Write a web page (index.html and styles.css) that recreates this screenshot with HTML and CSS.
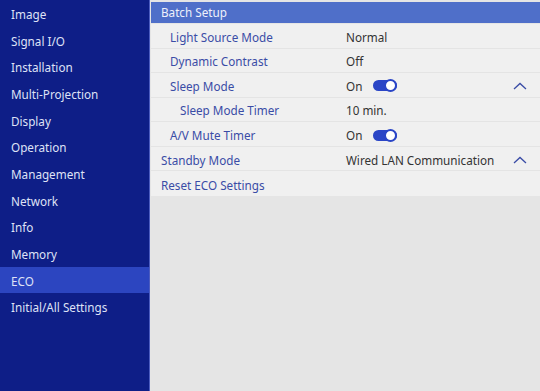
FILE: index.html
```html
<!DOCTYPE html>
<html lang="en">
<head>
  <meta charset="UTF-8">
  <title>ECO</title>
  <link rel="stylesheet" href="styles.css">
</head>
<body>
  <div class="screen">

    <!-- menu -->
    <div class="sidebar">
      <div class="menu-item">Image</div>
      <div class="menu-item">Signal I/O</div>
      <div class="menu-item">Installation</div>
      <div class="menu-item">Multi-Projection</div>
      <div class="menu-item">Display</div>
      <div class="menu-item">Operation</div>
      <div class="menu-item">Management</div>
      <div class="menu-item">Network</div>
      <div class="menu-item">Info</div>
      <div class="menu-item">Memory</div>
      <div class="menu-item active">ECO</div>
      <div class="menu-item">Initial/All Settings</div>
    </div>

    <!-- settings -->
    <div class="main">
      <div class="section-head">Batch Setup</div>
      <div class="list">
        <div class="row">
          <span class="label lvl1">Light Source Mode</span>
          <span class="value">Normal</span>
        </div>
        <div class="row">
          <span class="label lvl1">Dynamic Contrast</span>
          <span class="value">Off</span>
        </div>
        <div class="row">
          <span class="label lvl1">Sleep Mode</span>
          <span class="value">On <span class="toggle"></span></span>
          <svg class="chevron" width="14" height="8" viewBox="0 0 14 8"><polyline points="1,7 7,1.5 13,7" fill="none" stroke="#3a4ca6" stroke-width="1.3"/></svg>
        </div>
        <div class="row">
          <span class="label lvl2">Sleep Mode Timer</span>
          <span class="value">10 min.</span>
        </div>
        <div class="row">
          <span class="label lvl1">A/V Mute Timer</span>
          <span class="value">On <span class="toggle"></span></span>
        </div>
        <div class="row">
          <span class="label">Standby Mode</span>
          <span class="value">Wired LAN Communication</span>
          <svg class="chevron" width="14" height="8" viewBox="0 0 14 8"><polyline points="1,7 7,1.5 13,7" fill="none" stroke="#3a4ca6" stroke-width="1.3"/></svg>
        </div>
        <div class="row last">
          <span class="label">Reset ECO Settings</span>
        </div>
      </div>
    </div>

  </div>
</body>
</html>
```

FILE: styles.css
```css
body {
  margin: 0;
  font-family: 'Noto Sans', 'Open Sans', sans-serif;
  font-size: 11.7px;
}

.screen {
  display: flex;
  width: 540px;
  height: 391px;
  overflow: hidden;
}

.sidebar {
  width: 149px;
  flex-shrink: 0;
  background-color: #0e1e87;
  border-right: 1px solid #4c5cc0;
}

.menu-item {
  height: 26.67px;
  line-height: 24.67px;
  padding: 2px 0 0 11px;
  box-sizing: border-box;
  color: #dfe2f6;
}

.menu-item.active {
  background-color: #2c45c0;
}

.main {
  flex: 1;
  background-color: #e5e5e5;
  padding: 2px 0 0 1px;
}

.section-head {
  height: 21px;
  line-height: 21px;
  padding-left: 10px;
  background-color: #4f6fc9;
  color: #eef1fb;
  margin-bottom: 1px;
}

.list {
  background-color: #f0f0f0;
}

.row {
  display: flex;
  align-items: center;
  height: 24.57px;
  padding-top: 2px;
  box-sizing: border-box;
  border-bottom: 1px solid #e4e4e4;
  position: relative;
}

.row.last {
  border-bottom: none;
}

.label {
  width: 195px;
  padding-left: 10px;
  box-sizing: border-box;
  color: #3a4ca6;
}

.label.lvl1 {
  padding-left: 19px;
}

.label.lvl2 {
  padding-left: 29px;
}

.value {
  display: flex;
  align-items: center;
  color: #333;
}

.toggle {
  display: inline-block;
  width: 24px;
  height: 11px;
  margin-left: 11px;
  border-radius: 6px;
  background-color: #2a45c6;
  position: relative;
}

.toggle::after {
  content: "";
  position: absolute;
  right: 0;
  top: -1px;
  width: 9px;
  height: 9px;
  border-radius: 50%;
  background: #fff;
  border: 2px solid #2a45c6;
}

.chevron {
  position: absolute;
  right: 13px;
  top: 9px;
}
```
